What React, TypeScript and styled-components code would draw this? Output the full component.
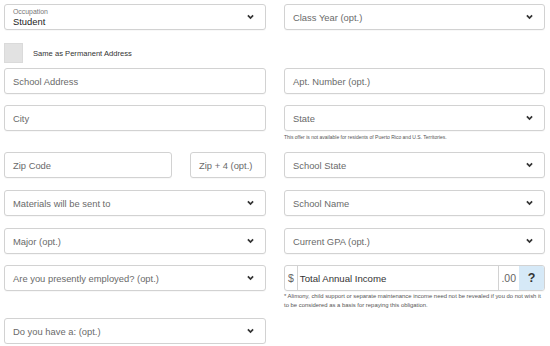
import React from "react";
import styled, { createGlobalStyle } from "styled-components";

const Global = createGlobalStyle`
  html, body { margin: 0; padding: 0; background: #fff; }
  body { font-family: "Liberation Sans", Arial, Helvetica, sans-serif; color: #555; }
  * { box-sizing: border-box; }
`;

const Form = styled.div`
  display: grid;
  grid-template-columns: 262px 261px;
  grid-template-rows: 39px 25px 37px 47px 38px 38px 37px 53px 26px;
  column-gap: 18px;
  padding: 4px 0 0 4px;
  align-items: start;
`;

const Cell = styled.div`
  display: flex;
  flex-direction: column;
`;

const Box = styled.div<{ $w?: number }>`
  height: 26px;
  width: ${(p) => (p.$w ? `${p.$w}px` : "100%")};
  border: 1px solid #d2d2d2;
  border-radius: 3px;
  background: #fff;
  display: flex;
  align-items: center;
  padding: 0 8px;
  font-size: 9.4px;
  color: #6a6a6a;
  box-shadow: 0 1px 1px rgba(0, 0, 0, 0.03);
`;

const Placeholder = styled.span`
  flex: 1;
  white-space: nowrap;
`;

const Stack = styled.div`
  flex: 1;
  display: flex;
  flex-direction: column;
  line-height: 1;
  padding-top: 2px;
`;

const SmallLabel = styled.span`
  font-size: 6.9px;
  color: #777;
  margin-bottom: 1px;
`;

const Value = styled.span`
  font-size: 9.4px;
  color: #222;
`;

const Chevron = () => (
  <svg width="7" height="6" viewBox="0 0 7 6" style={{ marginRight: 3 }}>
    <polyline points="0.9,1.4 3.5,4.1 6.1,1.4" fill="none" stroke="#333" strokeWidth="1.7" />
  </svg>
);

const Select = ({ text }: { text: string }) => (
  <Box>
    <Placeholder>{text}</Placeholder>
    <Chevron />
  </Box>
);

const CheckRow = styled.label`
  display: flex;
  align-items: center;
  gap: 10px;
  font-size: 7.6px;
  color: #333;
`;

const CheckSquare = styled.span`
  width: 19px;
  height: 20px;
  background: #e2e2e2;
  border: 1px solid #dadada;
`;

const ZipRow = styled.div`
  display: flex;
  justify-content: space-between;
`;

const Note = styled.p<{ $top: number; $size: number }>`
  margin: ${(p) => p.$top}px 0 0 0;
  font-size: ${(p) => p.$size}px;
  line-height: 9px;
  color: #555;
`;

const Group = styled.div`
  height: 26px;
  display: flex;
  border: 1px solid #d2d2d2;
  border-radius: 3px;
  overflow: hidden;
  box-shadow: 0 1px 1px rgba(0, 0, 0, 0.03);
`;

const Addon = styled.span<{ $side: "left" | "right" }>`
  display: flex;
  align-items: center;
  justify-content: center;
  padding: ${(p) => (p.$side === "left" ? "0 3px 0 3px" : "0 3px 0 2px")};
  font-size: 10.5px;
  color: #666;
  ${(p) => (p.$side === "left" ? "border-right" : "border-left")}: 1px solid #d2d2d2;
`;

const GroupInput = styled.span`
  flex: 1;
  display: flex;
  align-items: center;
  padding-left: 2px;
  font-size: 9.6px;
  color: #333;
`;

const Help = styled.span`
  width: 25px;
  background: #d6e9f7;
  display: flex;
  align-items: center;
  justify-content: center;
  font-weight: bold;
  font-size: 12.5px;
  color: #333;
`;

export default function App() {
  return (
    <>
      <Global />
      <Form>
        <Cell>
          <Box>
            <Stack>
              <SmallLabel>Occupation</SmallLabel>
              <Value>Student</Value>
            </Stack>
            <Chevron />
          </Box>
        </Cell>
        <Cell>
          <Select text="Class Year (opt.)" />
        </Cell>

        <Cell>
          <CheckRow>
            <CheckSquare />
            Same as Permanent Address
          </CheckRow>
        </Cell>
        <Cell />

        <Cell>
          <Box>
            <Placeholder>School Address</Placeholder>
          </Box>
        </Cell>
        <Cell>
          <Box>
            <Placeholder>Apt. Number (opt.)</Placeholder>
          </Box>
        </Cell>

        <Cell>
          <Box>
            <Placeholder>City</Placeholder>
          </Box>
        </Cell>
        <Cell>
          <Select text="State" />
          <Note $top={2} $size={5}>
            This offer is not available for residents of Puerto Rico and U.S. Territories.
          </Note>
        </Cell>

        <Cell>
          <ZipRow>
            <Box $w={168}>
              <Placeholder>Zip Code</Placeholder>
            </Box>
            <Box $w={76}>
              <Placeholder>Zip + 4 (opt.)</Placeholder>
            </Box>
          </ZipRow>
        </Cell>
        <Cell>
          <Select text="School State" />
        </Cell>

        <Cell>
          <Select text="Materials will be sent to" />
        </Cell>
        <Cell>
          <Select text="School Name" />
        </Cell>

        <Cell>
          <Select text="Major (opt.)" />
        </Cell>
        <Cell>
          <Select text="Current GPA (opt.)" />
        </Cell>

        <Cell>
          <Select text="Are you presently employed? (opt.)" />
        </Cell>
        <Cell>
          <Group>
            <Addon $side="left">$</Addon>
            <GroupInput>Total Annual Income</GroupInput>
            <Addon $side="right">.00</Addon>
            <Help>?</Help>
          </Group>
          <Note $top={1} $size={5.9}>
            * Alimony, child support or separate maintenance income need not be revealed if you do not wish it to be
            considered as a basis for repaying this obligation.
          </Note>
        </Cell>

        <Cell>
          <Select text="Do you have a: (opt.)" />
        </Cell>
        <Cell />
      </Form>
    </>
  );
}
